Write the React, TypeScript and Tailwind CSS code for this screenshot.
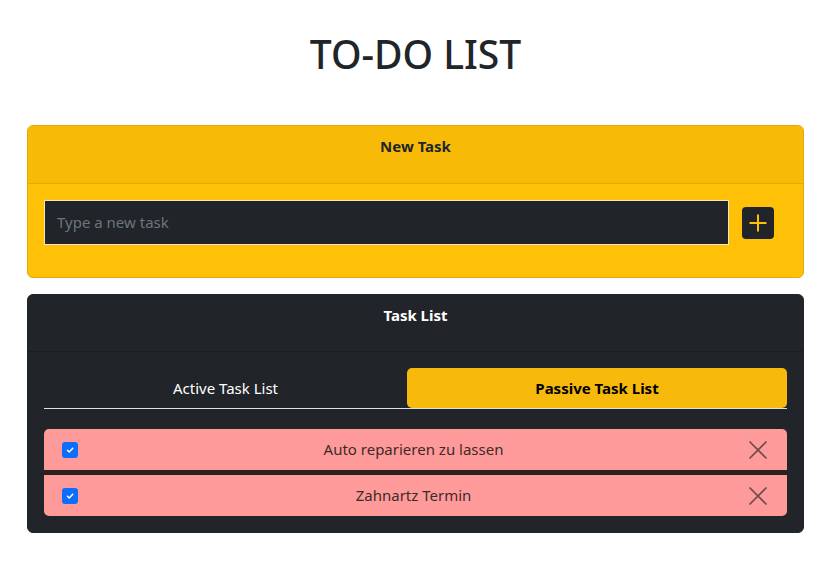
import React from "react";

const font = { fontFamily: '"Noto Sans", "Open Sans", sans-serif' };

function Check() {
  return (
    <span className="flex h-4 w-4 items-center justify-center rounded-[3px] bg-[#0d6efd]">
      <svg width="10" height="10" viewBox="0 0 20 20" fill="none">
        <path d="M5 10.5l3.5 3.5 7-7.5" stroke="#fff" strokeWidth="3" strokeLinecap="round" strokeLinejoin="round" />
      </svg>
    </span>
  );
}

function XIcon() {
  return (
    <svg width="18" height="18" viewBox="0 0 18 18" fill="none">
      <path d="M1 1L17 17M17 1L1 17" stroke="#6e4a4a" strokeWidth="1.7" strokeLinecap="round" />
    </svg>
  );
}

function Row({ text }: { text: string }) {
  return (
    <div className="flex h-[41px] items-center bg-[#ff9a9a] px-[18px] text-[15px] text-[#3d2a2a]">
      <Check />
      <div className="flex-1 text-center">{text}</div>
      <div className="mr-[2px]">
        <XIcon />
      </div>
    </div>
  );
}

export default function App() {
  return (
    <div className="min-h-[569px] bg-white px-[27px] pb-8" style={font}>
      <h1 className="pt-[30px] pb-[47px] text-center text-[39px] font-medium leading-[48px] text-[#212529]">
        TO-DO LIST
      </h1>

      <div className="overflow-hidden rounded-[6px] border border-[#e2aa08] bg-[#ffc107]">
        <div className="border-b border-[#e2aa08] bg-[#f7bb07] pt-2 pb-[25px] text-center text-[15px] font-bold leading-6 text-[#212529]">
          New Task
        </div>
        <div className="flex items-center pt-4 pb-8 pl-4 pr-[29px]">
          <div className="flex h-[45px] flex-1 items-center border border-[#f3e7c0] bg-[#212529] px-3 text-[15px] text-[#6c757d]">
            Type a new task
          </div>
          <div className="ml-[13px] flex h-8 w-8 items-center justify-center rounded-[4px] bg-[#212529]">
            <svg width="20" height="20" viewBox="0 0 20 20" fill="none">
              <path d="M10 1.5V18.5M1.5 10H18.5" stroke="#ffc107" strokeWidth="2" />
            </svg>
          </div>
        </div>
      </div>

      <div className="mt-4 overflow-hidden rounded-[6px] border border-[#212529] bg-[#212529]">
        <div className="border-b border-[#1b1e21] bg-[#212529] pt-2 pb-6 text-center text-[15px] font-bold leading-6 text-white">
          Task List
        </div>
        <div className="px-4 pt-4 pb-4">
          <div className="flex border-b border-[#dee2e6]">
            <div className="flex h-10 w-[363px] items-center justify-center text-[15px] text-white">
              Active Task List
            </div>
            <div className="flex h-10 flex-1 items-center justify-center rounded-[5px] bg-[#f7b90c] text-[15px] font-bold text-black">
              Passive Task List
            </div>
          </div>
          <div className="mt-5 flex flex-col gap-[5px] overflow-hidden rounded-[5px] bg-[#2e1f1f]">
            <Row text="Auto reparieren zu lassen" />
            <Row text="Zahnartz Termin" />
          </div>
        </div>
      </div>
    </div>
  );
}
